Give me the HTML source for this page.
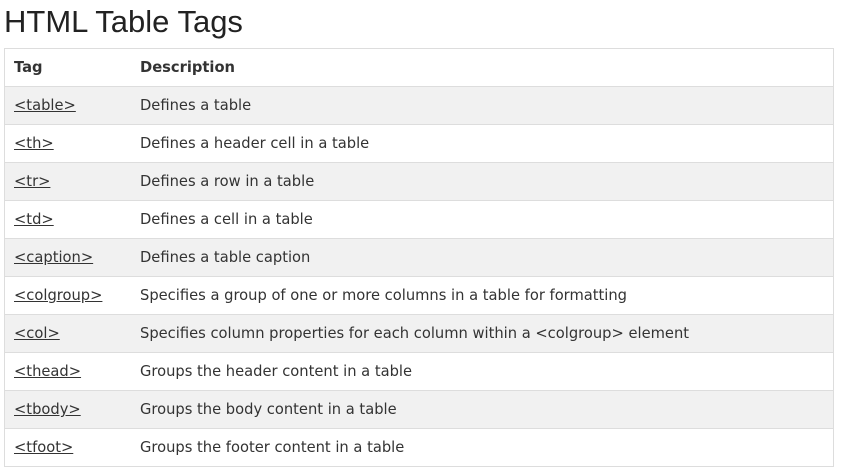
<!DOCTYPE html>
<html><head><style>
body{margin:0;background:#fff;width:842px;height:473px;overflow:hidden;font-family:"DejaVu Sans",Verdana,sans-serif;color:#333;}
h1{position:absolute;left:4px;top:4px;margin:0;font:normal 31px "Liberation Sans",Arial,sans-serif;color:#222;}
table{position:absolute;left:4px;top:48px;width:830px;border-collapse:collapse;border:1px solid #ddd;font-size:14.7px;}
td,th{height:37px;padding:0 0 0 9px;text-align:left;vertical-align:middle;border-bottom:1px solid #ddd;}
th{font-weight:bold;}
tr:nth-child(even){background:#f1f1f1;}
td:first-child,th:first-child{width:117px;}
a{color:#333;text-decoration:underline;}
</style></head><body>
<h1>HTML Table Tags</h1>
<table>
<tr><th>Tag</th><th>Description</th></tr>
<tr><td><a>&lt;table&gt;</a></td><td>Defines a table</td></tr>
<tr><td><a>&lt;th&gt;</a></td><td>Defines a header cell in a table</td></tr>
<tr><td><a>&lt;tr&gt;</a></td><td>Defines a row in a table</td></tr>
<tr><td><a>&lt;td&gt;</a></td><td>Defines a cell in a table</td></tr>
<tr><td><a>&lt;caption&gt;</a></td><td>Defines a table caption</td></tr>
<tr><td><a>&lt;colgroup&gt;</a></td><td>Specifies a group of one or more columns in a table for formatting</td></tr>
<tr><td><a>&lt;col&gt;</a></td><td>Specifies column properties for each column within a &lt;colgroup&gt; element</td></tr>
<tr><td><a>&lt;thead&gt;</a></td><td>Groups the header content in a table</td></tr>
<tr><td><a>&lt;tbody&gt;</a></td><td>Groups the body content in a table</td></tr>
<tr><td><a>&lt;tfoot&gt;</a></td><td>Groups the footer content in a table</td></tr>
</table>
</body></html>
